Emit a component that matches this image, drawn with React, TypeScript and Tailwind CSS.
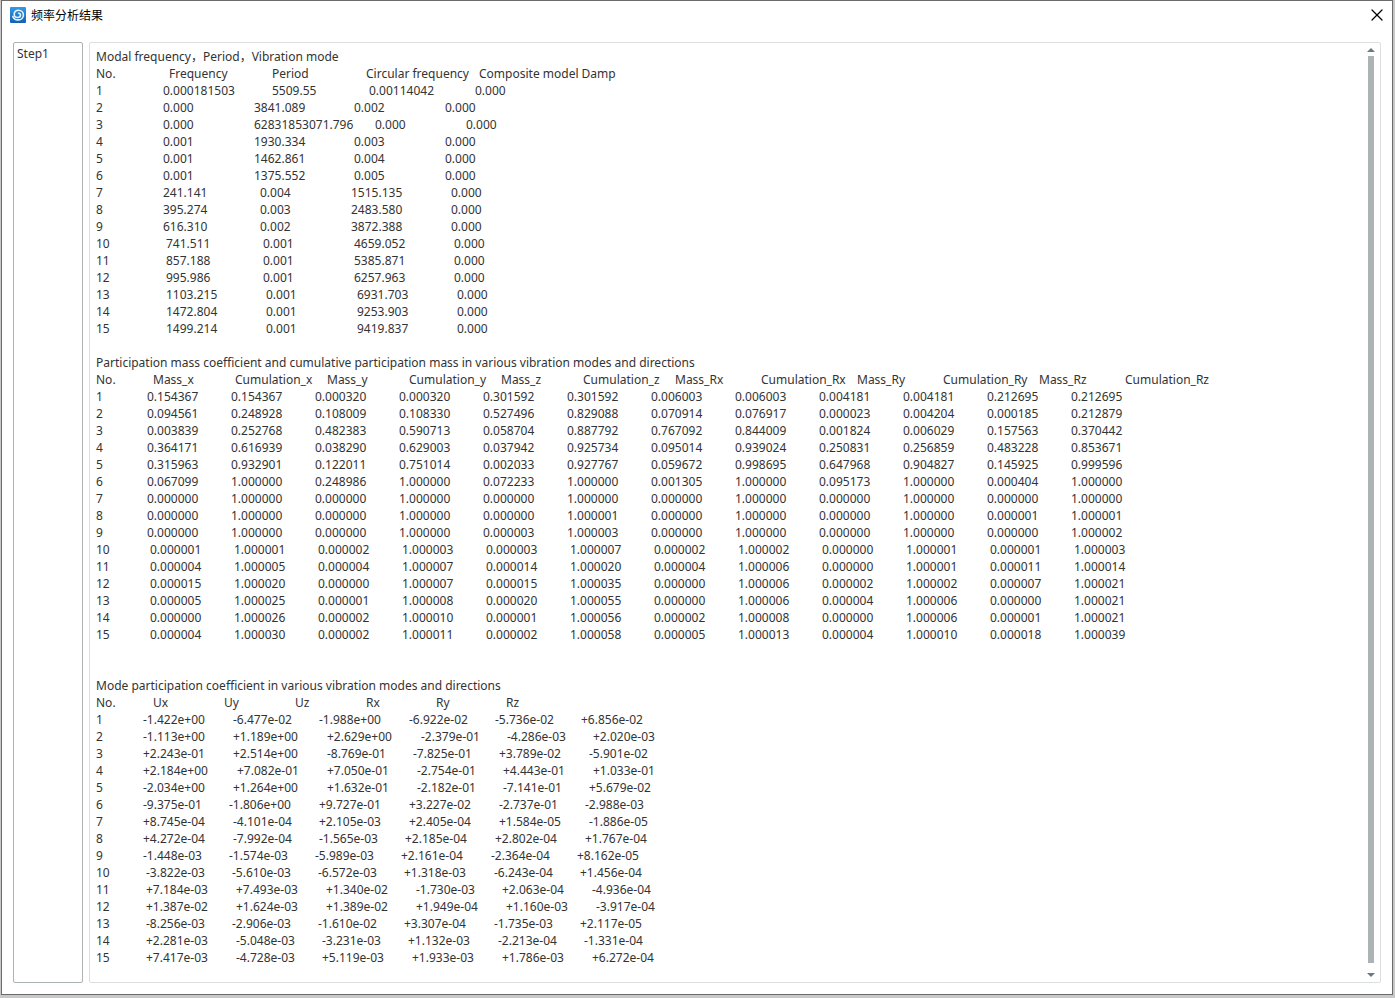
import { X } from "lucide-react";

// The report pads every field with blanks to a fixed number of characters.
const BLANK = 4;
const ADVANCE: Record<string, number> = { ".": 3, "-": 5, "+": 9 };

function fieldWidth(value: string, chars: number) {
  const text = [...value].reduce((sum, c) => sum + (ADVANCE[c] ?? 7), 0);
  return text + (chars - value.length) * BLANK;
}

interface Column {
  label: string;
  width: number;
}

interface ReportProps {
  title: string;
  columns: Column[];
  noChars: number;
  chars: number;
  rows: string[];
}

const FREQUENCY_COLUMNS: Column[] = [
  { label: "No.", width: 73 },
  { label: "Frequency", width: 103 },
  { label: "Period", width: 94 },
  { label: "Circular frequency", width: 113 },
  { label: "Composite model Damp", width: 150 },
];

const FREQUENCY_ROWS = [
  "0.000181503 5509.55 0.00114042 0.000",
  "0.000 3841.089 0.002 0.000",
  "0.000 62831853071.796 0.000 0.000",
  "0.001 1930.334 0.003 0.000",
  "0.001 1462.861 0.004 0.000",
  "0.001 1375.552 0.005 0.000",
  "241.141 0.004 1515.135 0.000",
  "395.274 0.003 2483.580 0.000",
  "616.310 0.002 3872.388 0.000",
  "741.511 0.001 4659.052 0.000",
  "857.188 0.001 5385.871 0.000",
  "995.986 0.001 6257.963 0.000",
  "1103.215 0.001 6931.703 0.000",
  "1472.804 0.001 9253.903 0.000",
  "1499.214 0.001 9419.837 0.000",
];

const MASS_COLUMNS: Column[] = [
  { label: "No.", width: 57 },
  { label: "Mass_x", width: 82 },
  { label: "Cumulation_x", width: 92 },
  { label: "Mass_y", width: 82 },
  { label: "Cumulation_y", width: 92 },
  { label: "Mass_z", width: 82 },
  { label: "Cumulation_z", width: 92 },
  { label: "Mass_Rx", width: 86 },
  { label: "Cumulation_Rx", width: 96 },
  { label: "Mass_Ry", width: 86 },
  { label: "Cumulation_Ry", width: 96 },
  { label: "Mass_Rz", width: 86 },
  { label: "Cumulation_Rz", width: 96 },
];

const MASS_ROWS = [
  "0.154367 0.154367 0.000320 0.000320 0.301592 0.301592 0.006003 0.006003 0.004181 0.004181 0.212695 0.212695",
  "0.094561 0.248928 0.108009 0.108330 0.527496 0.829088 0.070914 0.076917 0.000023 0.004204 0.000185 0.212879",
  "0.003839 0.252768 0.482383 0.590713 0.058704 0.887792 0.767092 0.844009 0.001824 0.006029 0.157563 0.370442",
  "0.364171 0.616939 0.038290 0.629003 0.037942 0.925734 0.095014 0.939024 0.250831 0.256859 0.483228 0.853671",
  "0.315963 0.932901 0.122011 0.751014 0.002033 0.927767 0.059672 0.998695 0.647968 0.904827 0.145925 0.999596",
  "0.067099 1.000000 0.248986 1.000000 0.072233 1.000000 0.001305 1.000000 0.095173 1.000000 0.000404 1.000000",
  "0.000000 1.000000 0.000000 1.000000 0.000000 1.000000 0.000000 1.000000 0.000000 1.000000 0.000000 1.000000",
  "0.000000 1.000000 0.000000 1.000000 0.000000 1.000001 0.000000 1.000000 0.000000 1.000000 0.000001 1.000001",
  "0.000000 1.000000 0.000000 1.000000 0.000003 1.000003 0.000000 1.000000 0.000000 1.000000 0.000000 1.000002",
  "0.000001 1.000001 0.000002 1.000003 0.000003 1.000007 0.000002 1.000002 0.000000 1.000001 0.000001 1.000003",
  "0.000004 1.000005 0.000004 1.000007 0.000014 1.000020 0.000004 1.000006 0.000000 1.000001 0.000011 1.000014",
  "0.000015 1.000020 0.000000 1.000007 0.000015 1.000035 0.000000 1.000006 0.000002 1.000002 0.000007 1.000021",
  "0.000005 1.000025 0.000001 1.000008 0.000020 1.000055 0.000000 1.000006 0.000004 1.000006 0.000000 1.000021",
  "0.000000 1.000026 0.000002 1.000010 0.000001 1.000056 0.000002 1.000008 0.000000 1.000006 0.000001 1.000021",
  "0.000004 1.000030 0.000002 1.000011 0.000002 1.000058 0.000005 1.000013 0.000004 1.000010 0.000018 1.000039",
];

const MODE_COLUMNS: Column[] = [
  { label: "No.", width: 57 },
  { label: "Ux", width: 71 },
  { label: "Uy", width: 71 },
  { label: "Uz", width: 71 },
  { label: "Rx", width: 70 },
  { label: "Ry", width: 70 },
  { label: "Rz", width: 70 },
];

const MODE_ROWS = [
  "-1.422e+00 -6.477e-02 -1.988e+00 -6.922e-02 -5.736e-02 +6.856e-02",
  "-1.113e+00 +1.189e+00 +2.629e+00 -2.379e-01 -4.286e-03 +2.020e-03",
  "+2.243e-01 +2.514e+00 -8.769e-01 -7.825e-01 +3.789e-02 -5.901e-02",
  "+2.184e+00 +7.082e-01 +7.050e-01 -2.754e-01 +4.443e-01 +1.033e-01",
  "-2.034e+00 +1.264e+00 +1.632e-01 -2.182e-01 -7.141e-01 +5.679e-02",
  "-9.375e-01 -1.806e+00 +9.727e-01 +3.227e-02 -2.737e-01 -2.988e-03",
  "+8.745e-04 -4.101e-04 +2.105e-03 +2.405e-04 +1.584e-05 -1.886e-05",
  "+4.272e-04 -7.992e-04 -1.565e-03 +2.185e-04 +2.802e-04 +1.767e-04",
  "-1.448e-03 -1.574e-03 -5.989e-03 +2.161e-04 -2.364e-04 +8.162e-05",
  "-3.822e-03 -5.610e-03 -6.572e-03 +1.318e-03 -6.243e-04 +1.456e-04",
  "+7.184e-03 +7.493e-03 +1.340e-02 -1.730e-03 +2.063e-04 -4.936e-04",
  "+1.387e-02 +1.624e-03 +1.389e-02 +1.949e-04 +1.160e-03 -3.917e-04",
  "-8.256e-03 -2.906e-03 -1.610e-02 +3.307e-04 -1.735e-03 +2.117e-05",
  "+2.281e-03 -5.048e-03 -3.231e-03 +1.132e-03 -2.213e-04 -1.331e-04",
  "+7.417e-03 -4.728e-03 +5.119e-03 +1.933e-03 +1.786e-03 +6.272e-04",
];

function Report({ title, columns, noChars, chars, rows }: ReportProps) {
  return (
    <table className="block whitespace-pre text-left">
      <caption className="block text-left">{title}</caption>
      <thead className="block">
        <tr className="flex">
          {columns.map((col) => (
            <th key={col.label} scope="col" className="shrink-0 p-0 font-normal" style={{ width: col.width }}>
              {col.label}
            </th>
          ))}
        </tr>
      </thead>
      <tbody className="block">
        {rows.map((row, i) => {
          const no = String(i + 1);
          return (
            <tr key={no} className="flex">
              <td className="shrink-0 p-0" style={{ width: fieldWidth(no, noChars) }}>
                {no}
              </td>
              {row.split(" ").map((value, j) => (
                <td key={j} className="shrink-0 p-0" style={{ width: fieldWidth(value, chars) }}>
                  {value}
                </td>
              ))}
            </tr>
          );
        })}
      </tbody>
    </table>
  );
}

function AppLogo() {
  return (
    <svg className="size-4" viewBox="0 0 16 16" aria-hidden="true">
      <defs>
        <linearGradient id="logo" x1="0" y1="0" x2="0" y2="1">
          <stop offset="0" stopColor="#2f9be6" />
          <stop offset="1" stopColor="#1460b4" />
        </linearGradient>
      </defs>
      <rect width="16" height="16" rx="1" fill="url(#logo)" />
      <path
        d="M2.800 9.500C3.800 12 6 13 8.300 12.900c3-.1 5.100-2.200 5.100-5 0-2.700-2.200-4.700-4.900-4.700-2.600 0-4.300 1.800-4.300 4 0 2 1.500 3.300 3.400 3.300 1.700 0 2.900-1 2.900-2.400 0-1.200-.9-1.900-1.900-1.900"
        fill="none"
        stroke="#e6f3fc"
        strokeWidth="1.600"
        strokeLinecap="round"
      />
    </svg>
  );
}

function ScrollBar() {
  return (
    <div className="flex w-2 shrink-0 flex-col items-center gap-1" aria-hidden="true">
      <svg className="h-1 w-2" viewBox="0 0 8 4">
        <path d="M4 0 8 4H0z" fill="#647a86" />
      </svg>
      <div className="w-1.5 flex-1 bg-[#adb2b5]" />
      <svg className="mt-1.5 h-1 w-2" viewBox="0 0 8 4">
        <path d="M0 0h8L4 4z" fill="#647a86" />
      </svg>
    </div>
  );
}

export default function App() {
  return (
    <div className="flex min-h-screen flex-col bg-[#c8c8c8] pr-0.5 pb-[3px] pl-px font-['Noto_Sans','Noto_Sans_CJK_SC',sans-serif] text-xs leading-[17px] text-[#333333]">
      <main className="flex flex-1 flex-col border border-[#6b6b6b] bg-white">
        <header className="flex h-7 items-center justify-between pr-[5px] pl-2">
          <div className="flex items-center gap-[5px]">
            <AppLogo />
            <h1 className="text-black">频率分析结果</h1>
          </div>
          <button type="button" aria-label="Close" className="text-black">
            <X className="size-5" strokeWidth={1.5} />
          </button>
        </header>
        <div className="flex flex-1 gap-1.5 px-[11px] pt-[13px] pb-[11px]">
          <ul className="w-[70px] shrink-0 rounded-xs border border-[#adb2b5] px-[3px] py-0.5">
            <li>
              <button type="button" className="block">Step1</button>
            </li>
          </ul>
          <section className="flex min-w-0 flex-1 justify-between rounded-xs border border-[#dcdfe0] py-[5px] pr-[5px] pl-1.5">
            <div className="flex min-w-0 flex-col gap-[17px]">
              <Report
                title="Modal frequency，Period，Vibration mode"
                columns={FREQUENCY_COLUMNS}
                noChars={16}
                chars={20}
                rows={FREQUENCY_ROWS}
              />
              <Report
                title="Participation mass coefficient and cumulative participation mass in various vibration modes and directions"
                columns={MASS_COLUMNS}
                noChars={12}
                chars={16}
                rows={MASS_ROWS}
              />
              <div className="pt-[17px]">
                <Report
                  title="Mode participation coefficient in various vibration modes and directions"
                  columns={MODE_COLUMNS}
                  noChars={11}
                  chars={16}
                  rows={MODE_ROWS}
                />
              </div>
            </div>
            <ScrollBar />
          </section>
        </div>
      </main>
    </div>
  );
}
